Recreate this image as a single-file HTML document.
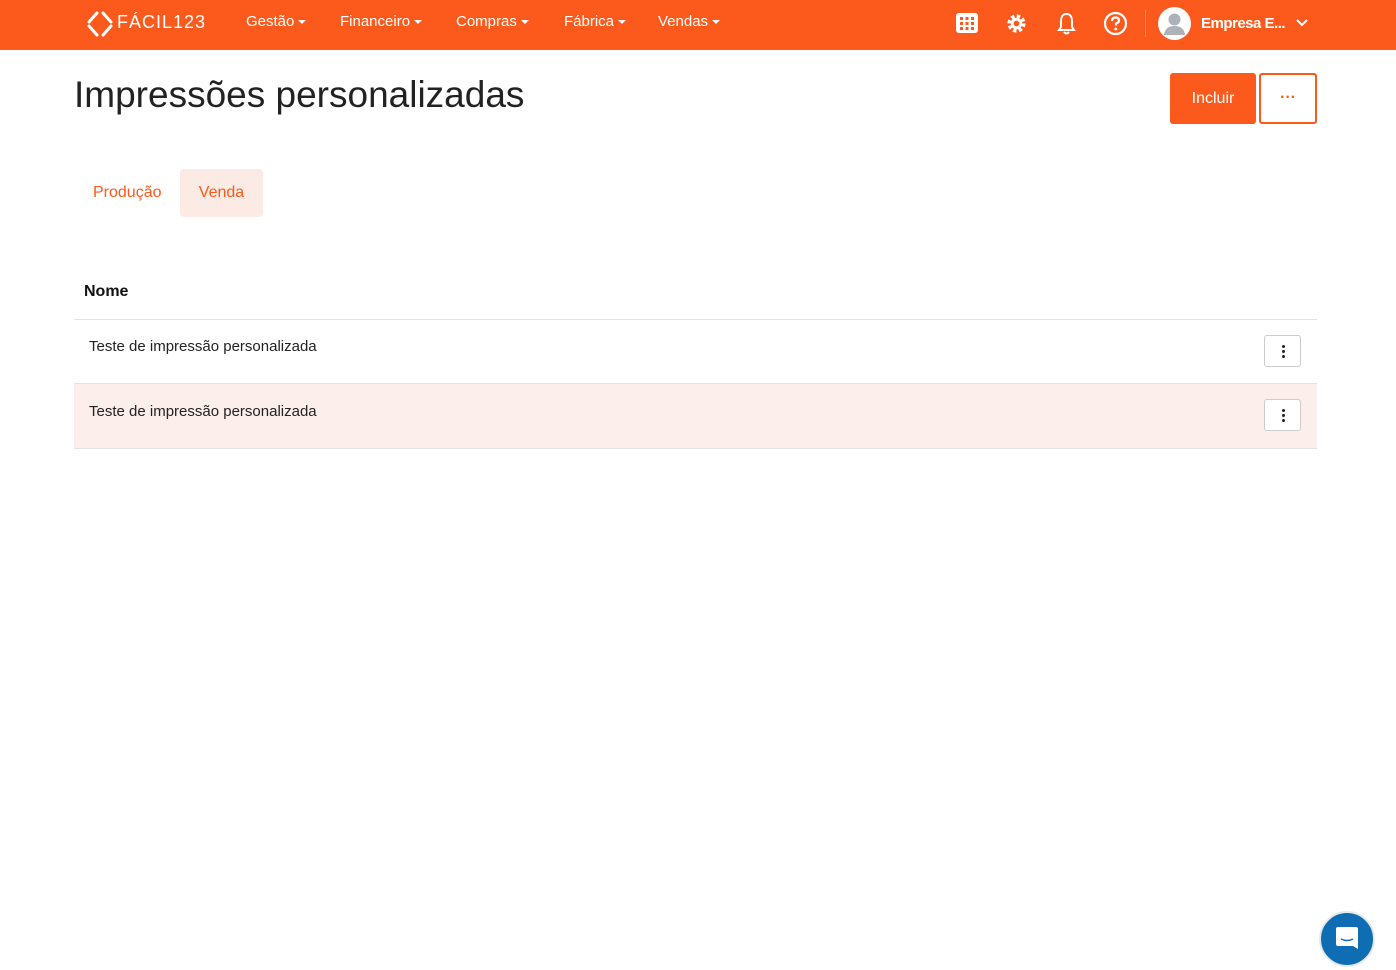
<!DOCTYPE html>
<html><head><meta charset="utf-8"><style>
*{box-sizing:border-box;margin:0;padding:0}
body{width:1396px;height:970px;background:#fff;font-family:"Liberation Sans",sans-serif;color:#222;position:relative;overflow:hidden}
.nav{position:absolute;left:0;top:0;width:1396px;height:50px;background:#fc591c;color:#fff}
.nav .it{position:absolute;top:13px;font-size:15px}
.caret{display:inline-block;border-left:4px solid transparent;border-right:4px solid transparent;border-top:4px solid #fff;vertical-align:middle;margin-left:4px}
h1{position:absolute;left:74px;top:74px;font-size:37px;font-weight:normal;color:#222}
.btn{position:absolute;top:73px;height:51px;border-radius:3px;font-size:16px;text-align:center;line-height:51px}
.row{position:absolute;left:74px;width:1243px;border-bottom:1px solid #e3e3e3;font-size:15px}
.kb{position:absolute;right:16px;top:15px;width:37px;height:32px;border:1px solid #ccc;border-radius:3px;background:#fff}
.kb i{position:absolute;left:17px;width:3px;height:3px;background:#222;border-radius:50%}
</style></head><body>
<div class="nav">
<svg style="position:absolute;left:86px;top:10px" width="28" height="28" viewBox="0 0 28 28"><path d="M11 3 L3 12 M3 16 L11 25 M17 25 L25 16 M25 12 L17 3" stroke="#fff" stroke-width="3" stroke-linecap="round" fill="none"/></svg>
<div class="it" style="left:117px;top:12px;font-size:18px;letter-spacing:1px">FÁCIL123</div>
<div class="it" style="left:246px">Gestão<span class="caret"></span></div>
<div class="it" style="left:340px">Financeiro<span class="caret"></span></div>
<div class="it" style="left:456px">Compras<span class="caret"></span></div>
<div class="it" style="left:564px">Fábrica<span class="caret"></span></div>
<div class="it" style="left:658px">Vendas<span class="caret"></span></div>
<svg style="position:absolute;left:956px;top:13px" width="22" height="20" viewBox="0 0 22 20"><rect x="0" y="0" width="22" height="20" rx="3" fill="#fff"/><g fill="#fc591c"><rect x="4" y="4" width="3" height="3"/><rect x="9.5" y="4" width="3" height="3"/><rect x="15" y="4" width="3" height="3"/><rect x="4" y="9" width="3" height="3"/><rect x="9.5" y="9" width="3" height="3"/><rect x="15" y="9" width="3" height="3"/><rect x="4" y="14" width="3" height="3"/><rect x="9.5" y="14" width="3" height="3"/><rect x="15" y="14" width="3" height="3"/></g></svg>
<svg style="position:absolute;left:1005px;top:12px" width="23" height="23" viewBox="0 0 24 24"><circle cx="12" cy="12" r="7" fill="none" stroke="#fff" stroke-width="5" stroke-dasharray="3.2 2.3"/><circle cx="12" cy="12" r="6" fill="#fff"/><circle cx="12" cy="12" r="3" fill="#fc591c"/></svg>
<svg style="position:absolute;left:1056px;top:11px" width="21" height="25" viewBox="0 0 21 25"><path d="M10.5 3 C6 3 5 7 5 10 V16 L3 19 H18 L16 16 V10 C16 7 15 3 10.5 3Z M8 21 Q10.5 24 13 21" fill="none" stroke="#fff" stroke-width="2"/></svg>
<svg style="position:absolute;left:1103px;top:11px" width="25" height="25" viewBox="0 0 25 25"><circle cx="12.5" cy="12.5" r="10.5" fill="none" stroke="#fff" stroke-width="2.2"/><path d="M9 10 Q9 6.5 12.5 6.5 Q16 6.5 16 9.5 Q16 11.5 13 12.5 V14.5" fill="none" stroke="#fff" stroke-width="2.2"/><circle cx="12.8" cy="18" r="1.4" fill="#fff"/></svg>
<div style="position:absolute;left:1145px;top:10px;width:1px;height:27px;background:#fd8a5e"></div>
<svg style="position:absolute;left:1158px;top:7px" width="33" height="33" viewBox="0 0 33 33"><circle cx="16.5" cy="16.5" r="16.5" fill="#fff"/><circle cx="16.5" cy="12.5" r="6" fill="#aeb2b8"/><path d="M6 28 Q7 19 16.5 19 Q26 19 27 28 Z" fill="#aeb2b8"/></svg>
<div class="it" style="left:1201px;top:15px;font-size:15px;font-weight:bold;letter-spacing:-0.5px">Empresa E...</div>
<svg style="position:absolute;left:1295px;top:18px" width="14" height="10"><path d="M2 2 L7 7 L12 2" stroke="#fff" stroke-width="2" fill="none"/></svg>
</div>
<h1>Impressões personalizadas</h1>
<div class="btn" style="left:1170px;width:86px;background:#fc591c;color:#fff">Incluir</div>
<div class="btn" style="left:1259px;width:58px;border:2px solid #fc591c;color:#fc591c;line-height:46px;font-weight:bold">···</div>
<div style="position:absolute;left:93px;top:184px;font-size:16px;color:#fc591c">Produção</div>
<div style="position:absolute;left:180px;top:169px;width:83px;height:48px;background:#fcebe4;border-radius:4px;color:#fc591c;font-size:16px;text-align:center;line-height:48px">Venda</div>
<div class="row" style="top:270px;height:50px;font-weight:bold;font-size:16px;padding:13px 10px;color:#111">Nome</div>
<div class="row" style="top:320px;height:64px;padding:18px 15px">Teste de impressão personalizada<div class="kb"><i style="top:9px"></i><i style="top:14px"></i><i style="top:19px"></i></div></div>
<div class="row" style="top:384px;height:65px;padding:19px 15px;background:#fbeeeb">Teste de impressão personalizada<div class="kb"><i style="top:9px"></i><i style="top:14px"></i><i style="top:19px"></i></div></div>
<div style="position:absolute;left:1319px;top:911px;width:56px;height:56px;border-radius:50%;background:#0f6eb3;border:2px solid #e6e9ec"></div>
<svg style="position:absolute;left:1334px;top:925px" width="26" height="28" viewBox="0 0 26 28"><path d="M4 2 H22 Q24 2 24 4 V24 L19 21 H4 Q2 21 2 19 V4 Q2 2 4 2Z" fill="#fff"/><path d="M7 14 Q13 17 19 14" stroke="#0f6eb3" stroke-width="1.5" fill="none"/></svg>
</body></html>
